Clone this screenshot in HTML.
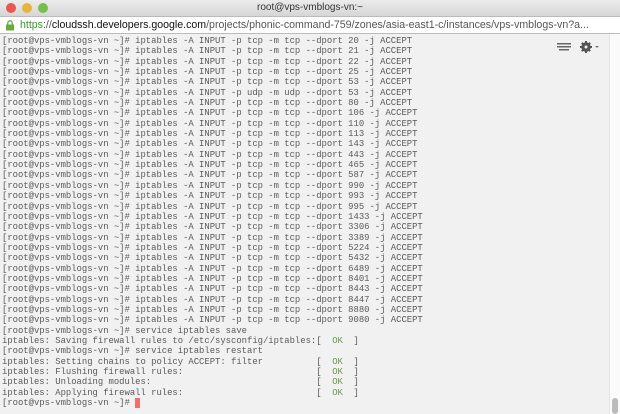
<!DOCTYPE html>
<html><head><meta charset="utf-8"><style>
*{margin:0;padding:0;box-sizing:border-box}
body{width:620px;height:414px;overflow:hidden;background:#f1f1f1;font-family:"Liberation Sans",sans-serif;position:relative}
#title{position:absolute;left:0;top:0;width:620px;height:16px;background:linear-gradient(#ececec,#d6d6d6);text-align:center;font-size:10px;line-height:16px;color:#333}
.dot{position:absolute;top:3px;width:10px;height:10px;border-radius:50%}
#addr{position:absolute;left:0;top:16px;width:620px;height:18px;background:#fff;border-top:1px solid #bbb;border-bottom:1px solid #bbb;font-size:10.6px;line-height:16px;color:#555;white-space:nowrap;overflow:hidden;padding-left:20px}
#term{position:absolute;left:2px;top:36px;font-family:"Liberation Mono",monospace;font-size:8.9px;line-height:10.35px;color:#5a5a5a;white-space:pre}
.ok{color:#6a9a4a}
#sb{position:absolute;left:609px;top:34px;width:11px;height:380px;background:#fafafa;border-left:1px solid #e4e4e4}
</style></head><body>
<div id="title">root@vps-vmblogs-vn:~
<div class="dot" style="left:6px;background:#e9574f"></div>
<div class="dot" style="left:22px;background:#e8b43a"></div>
<div class="dot" style="left:38px;background:#74c04c"></div>
</div>
<div id="addr"><svg style="position:absolute;left:5px;top:3px" width="10" height="11"><rect x="1" y="4.5" width="8" height="6" fill="#6aaa3a"/><path d="M2.8 4.5V3a2.2 2.2 0 0 1 4.4 0v1.5" stroke="#6aaa3a" stroke-width="1.3" fill="none"/></svg><span style="color:#3a9a2a">https</span>://<span style="color:#111">cloudssh.developers.google.com</span>/projects/phonic-command-759/zones/asia-east1-c/instances/vps-vmblogs-vn?a...</div>
<div id="sb"><div style="position:absolute;left:2px;top:364px;width:6px;height:16px;background:#bbb;border-radius:3px"></div></div>
<svg style="position:absolute;left:557px;top:43px" width="14" height="8"><g fill="#666"><rect x="0" y="0" width="14" height="1.5"/><rect x="0" y="3" width="14" height="1.5"/><rect x="2" y="6" width="10" height="1.5"/></g></svg>
<svg style="position:absolute;left:580px;top:41px" width="20" height="12"><circle cx="6" cy="6" r="3.5" fill="none" stroke="#555" stroke-width="2.5"/><g stroke="#555" stroke-width="2"><path d="M6 0v12M0 6h12M1.8 1.8l8.4 8.4M10.2 1.8l-8.4 8.4"/></g><circle cx="6" cy="6" r="1.5" fill="#f1f1f1"/><path d="M15 5l2 2 2-2z" fill="#777"/></svg>
<div id="term">[root@vps-vmblogs-vn ~]# iptables -A INPUT -p tcp -m tcp --dport 20 -j ACCEPT
[root@vps-vmblogs-vn ~]# iptables -A INPUT -p tcp -m tcp --dport 21 -j ACCEPT
[root@vps-vmblogs-vn ~]# iptables -A INPUT -p tcp -m tcp --dport 22 -j ACCEPT
[root@vps-vmblogs-vn ~]# iptables -A INPUT -p tcp -m tcp --dport 25 -j ACCEPT
[root@vps-vmblogs-vn ~]# iptables -A INPUT -p tcp -m tcp --dport 53 -j ACCEPT
[root@vps-vmblogs-vn ~]# iptables -A INPUT -p udp -m udp --dport 53 -j ACCEPT
[root@vps-vmblogs-vn ~]# iptables -A INPUT -p tcp -m tcp --dport 80 -j ACCEPT
[root@vps-vmblogs-vn ~]# iptables -A INPUT -p tcp -m tcp --dport 106 -j ACCEPT
[root@vps-vmblogs-vn ~]# iptables -A INPUT -p tcp -m tcp --dport 110 -j ACCEPT
[root@vps-vmblogs-vn ~]# iptables -A INPUT -p tcp -m tcp --dport 113 -j ACCEPT
[root@vps-vmblogs-vn ~]# iptables -A INPUT -p tcp -m tcp --dport 143 -j ACCEPT
[root@vps-vmblogs-vn ~]# iptables -A INPUT -p tcp -m tcp --dport 443 -j ACCEPT
[root@vps-vmblogs-vn ~]# iptables -A INPUT -p tcp -m tcp --dport 465 -j ACCEPT
[root@vps-vmblogs-vn ~]# iptables -A INPUT -p tcp -m tcp --dport 587 -j ACCEPT
[root@vps-vmblogs-vn ~]# iptables -A INPUT -p tcp -m tcp --dport 990 -j ACCEPT
[root@vps-vmblogs-vn ~]# iptables -A INPUT -p tcp -m tcp --dport 993 -j ACCEPT
[root@vps-vmblogs-vn ~]# iptables -A INPUT -p tcp -m tcp --dport 995 -j ACCEPT
[root@vps-vmblogs-vn ~]# iptables -A INPUT -p tcp -m tcp --dport 1433 -j ACCEPT
[root@vps-vmblogs-vn ~]# iptables -A INPUT -p tcp -m tcp --dport 3306 -j ACCEPT
[root@vps-vmblogs-vn ~]# iptables -A INPUT -p tcp -m tcp --dport 3389 -j ACCEPT
[root@vps-vmblogs-vn ~]# iptables -A INPUT -p tcp -m tcp --dport 5224 -j ACCEPT
[root@vps-vmblogs-vn ~]# iptables -A INPUT -p tcp -m tcp --dport 5432 -j ACCEPT
[root@vps-vmblogs-vn ~]# iptables -A INPUT -p tcp -m tcp --dport 6489 -j ACCEPT
[root@vps-vmblogs-vn ~]# iptables -A INPUT -p tcp -m tcp --dport 8401 -j ACCEPT
[root@vps-vmblogs-vn ~]# iptables -A INPUT -p tcp -m tcp --dport 8443 -j ACCEPT
[root@vps-vmblogs-vn ~]# iptables -A INPUT -p tcp -m tcp --dport 8447 -j ACCEPT
[root@vps-vmblogs-vn ~]# iptables -A INPUT -p tcp -m tcp --dport 8880 -j ACCEPT
[root@vps-vmblogs-vn ~]# iptables -A INPUT -p tcp -m tcp --dport 9080 -j ACCEPT
[root@vps-vmblogs-vn ~]# service iptables save
iptables: Saving firewall rules to /etc/sysconfig/iptables:[  <span class="ok">OK</span>  ]
[root@vps-vmblogs-vn ~]# service iptables restart
iptables: Setting chains to policy ACCEPT: filter          [  <span class="ok">OK</span>  ]
iptables: Flushing firewall rules:                         [  <span class="ok">OK</span>  ]
iptables: Unloading modules:                               [  <span class="ok">OK</span>  ]
iptables: Applying firewall rules:                         [  <span class="ok">OK</span>  ]
[root@vps-vmblogs-vn ~]# <span style="background:#f07070">&nbsp;</span></div>
</body></html>
